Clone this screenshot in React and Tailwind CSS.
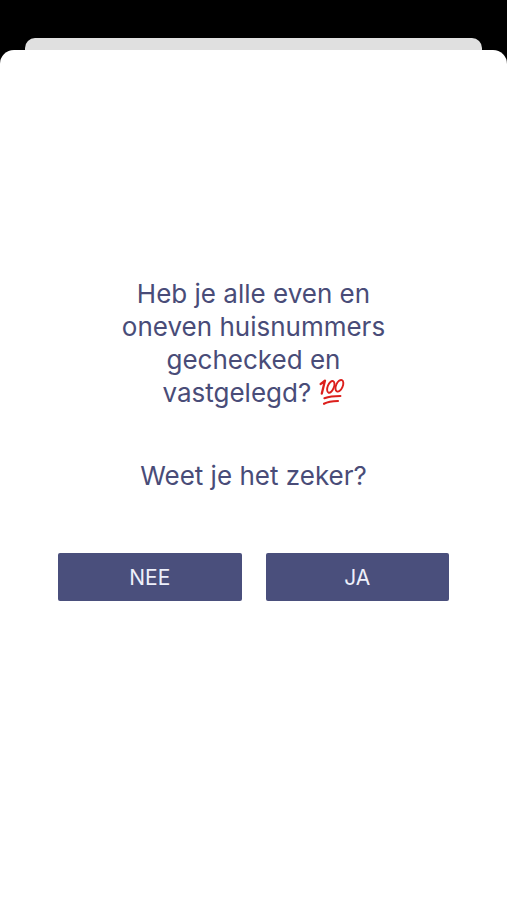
const actions = [
  { label: "NEE", value: "no" },
  { label: "JA", value: "yes" },
];

function HundredIcon() {
  return (
    <svg
      role="img"
      aria-label="100"
      viewBox="0 0 26 28"
      className="inline-block w-[26px] h-[28px] align-[-4px]"
      fill="none"
      stroke="#dc1f1c"
      strokeLinecap="round"
      strokeLinejoin="round"
    >
      <path d="M1.6 6C3.4 5 4.8 4 6 2.6L2.8 15.6" strokeWidth="2.3" />
      <ellipse cx="11.8" cy="8.8" rx="3.1" ry="6.2" transform="rotate(22 11.8 8.8)" strokeWidth="1.9" />
      <ellipse cx="20.4" cy="7.8" rx="3.3" ry="6.2" transform="rotate(24 20.4 7.8)" strokeWidth="1.9" />
      <path d="M5.4 20.2C10 18.6 15 18 21.4 18" strokeWidth="2.1" />
      <path d="M5 25.8C8 24.2 12 23.2 19 23" strokeWidth="2.1" />
    </svg>
  );
}

export default function App() {
  return (
    <div className="min-h-screen flex flex-col bg-black pt-[38px] font-['Inter','Liberation_Sans',sans-serif]">

      {/* CARD BEHIND */}
      <div className="mx-[25px] h-3 rounded-t-[10px] bg-[#e0e0e0]" />

      {/* SHEET */}
      <main
        role="dialog"
        aria-labelledby="question"
        className="flex-1 rounded-t-[14px] bg-white px-[58px] pt-[227px] pb-12 text-center text-[#494c78]"
      >
        <h1 id="question" className="mx-auto max-w-[270px] text-[26px] leading-[33px] font-normal">
          Heb je alle even en oneven huisnummers gechecked en vastgelegd? <HundredIcon />
        </h1>

        <p className="mt-[50px] text-[26px] leading-[33px]">Weet je het zeker?</p>

        {/* ACTIONS */}
        <div className="mt-[61px] grid grid-cols-2 gap-6">
          {actions.map((action) => (
            <button
              key={action.value}
              type="button"
              className="h-12 rounded-[2px] bg-[#4a4f7c] pt-0.5 text-[21px] text-[#eef0fb]"
            >
              {action.label}
            </button>
          ))}
        </div>
      </main>
    </div>
  );
}
